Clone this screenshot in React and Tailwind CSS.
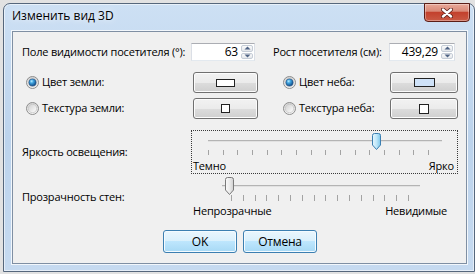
import React from 'react';

const greyBtn =
  'flex items-center justify-center rounded-[3px] border border-[#707070] bg-[linear-gradient(#f2f2f2_0%,#ebebeb_50%,#dddddd_50%,#cfcfcf_100%)] shadow-[inset_0_0_0_1px_#fcfcfc]';
const blueBtn =
  'flex items-center justify-center rounded-[3px] border border-[#3c7fb1] bg-[linear-gradient(#eaf6fd_0%,#d9f0fc_50%,#bee6fd_50%,#a7d9f5_100%)] shadow-[inset_0_0_0_1px_#f4fbff]';

const Radio = ({ checked }) => (
  <svg width="13" height="13" viewBox="0 0 13 13" className="shrink-0">
    <defs>
      <linearGradient id="rOuter" x1="0" y1="0" x2="0" y2="1">
        <stop offset="0" stopColor="#d4d4d4" />
        <stop offset="1" stopColor="#f6f6f6" />
      </linearGradient>
      <linearGradient id="rInner" x1="0" y1="0" x2="1" y2="1">
        <stop offset="0" stopColor="#cfcfcf" />
        <stop offset="1" stopColor="#ffffff" />
      </linearGradient>
      <radialGradient id="rDot" cx="0.38" cy="0.32" r="0.75">
        <stop offset="0" stopColor="#b8ecff" />
        <stop offset="0.35" stopColor="#3fa4e0" />
        <stop offset="1" stopColor="#0b3e78" />
      </radialGradient>
    </defs>
    <circle cx="6.5" cy="6.5" r="6" fill="url(#rOuter)" stroke="#8d8d8d" />
    <circle cx="6.5" cy="6.5" r="4.2" fill="url(#rInner)" stroke="#bdbdbd" strokeWidth="0.6" />
    {checked && <circle cx="6.5" cy="6.5" r="3.6" fill="url(#rDot)" stroke="#1d4f86" strokeWidth="0.6" />}
  </svg>
);

const Arrow = ({ up }) => (
  <svg width="7" height="4" viewBox="0 0 7 4">
    <path d={up ? 'M0.5 3.5 L3.5 0.5 L6.5 3.5 Z' : 'M0.5 0.5 L3.5 3.5 L6.5 0.5 Z'} fill="#4f6384" />
  </svg>
);

const Spin = ({ value, w }) => (
  <div className={`flex h-[18px] ${w} shrink-0 border border-[#abadb3] border-x-[#dbdfe6] border-b-[#e3e9ef] bg-white`}>
    <div className="flex-1 pr-[3px] text-right text-[12px] leading-[16px]">{value}</div>
    <div className="flex w-[13px] flex-col gap-px py-px pr-px">
      {[true, false].map((up) => (
        <div
          key={String(up)}
          className="flex flex-1 items-center justify-center rounded-[2px] border border-[#c5ccd6] bg-linear-to-b from-[#fbfbfb] to-[#e4e7eb]"
        >
          <Arrow up={up} />
        </div>
      ))}
    </div>
  </div>
);

const Ticks = ({ x0, step, y1, y2 }) =>
  Array.from({ length: 16 }, (_, i) => {
    const x = Math.round(x0 + i * step) + 0.5;
    return <line key={i} x1={x} x2={x} y1={y1} y2={y2} stroke="#a3a3a3" />;
  });

const Thumb = ({ x, y, h, blue }) => (
  <path
    d={`M${x + 0.5} ${y + 2.5} Q${x + 0.5} ${y + 0.5} ${x + 2.5} ${y + 0.5} H${x + 6.5} Q${x + 8.5} ${y + 0.5} ${x + 8.5} ${y + 2.5} V${y + h - 5} L${x + 4.5} ${y + h - 0.5} L${x + 0.5} ${y + h - 5} Z`}
    fill={blue ? 'url(#thBlue)' : 'url(#thGrey)'}
    stroke={blue ? '#3c7fb1' : '#7a7a7a'}
  />
);

const SliderDefs = () => (
  <defs>
    <linearGradient id="thBlue" x1="0" y1="0" x2="1" y2="0">
      <stop offset="0" stopColor="#e6f6fd" />
      <stop offset="0.5" stopColor="#bfe7f9" />
      <stop offset="1" stopColor="#7cc6ea" />
    </linearGradient>
    <linearGradient id="thGrey" x1="0" y1="0" x2="1" y2="0">
      <stop offset="0" stopColor="#fafafa" />
      <stop offset="0.5" stopColor="#ececec" />
      <stop offset="1" stopColor="#cfcfcf" />
    </linearGradient>
  </defs>
);

const Track = ({ x1, x2, y }) => (
  <>
    <line x1={x1} x2={x2} y1={y + 0.5} y2={y + 0.5} stroke="#b4b4b4" />
    <line x1={x1} x2={x2} y1={y + 1.5} y2={y + 1.5} stroke="#e2e2e2" />
  </>
);

export default function App() {
  return (
    <div className="h-[274px] w-[475px] overflow-hidden whitespace-nowrap bg-[#e2e2e2] pl-[3px] pt-[3px] font-['Open_Sans','Noto_Sans',sans-serif] text-[11px] tracking-[-0.2px] text-black">
      <div className="flex h-[269px] w-[472px] flex-col rounded-t-[7px] border border-[#56677c] bg-linear-to-b from-[#cde0f4] via-[#bcd3ec] to-[#c6daf0] shadow-[inset_0_0_0_1px_rgba(255,255,255,0.55)]">
        <div className="flex h-[27px] items-start">
          <div className="pl-[8px] pt-[5px] text-[12px] leading-[14px] tracking-normal [text-shadow:0_0_6px_#ffffff]">Изменить вид 3D</div>
          <div className="-mt-px mr-[4px] ml-auto flex h-[19px] w-[46px] items-center justify-center rounded-b-[4px] border border-[#5b1d16] bg-[linear-gradient(#e9a898_0%,#d98a78_42%,#c3412d_50%,#c95a44_100%)] shadow-[inset_0_0_0_1px_rgba(255,255,255,0.35)]">
            <svg width="12" height="10" viewBox="0 0 12 10">
              <path d="M2 1.5 L10 8.5 M10 1.5 L2 8.5" stroke="#5a1e17" strokeWidth="4" strokeLinecap="round" />
              <path d="M2 1.5 L10 8.5 M10 1.5 L2 8.5" stroke="#ffffff" strokeWidth="2.4" strokeLinecap="round" />
            </svg>
          </div>
        </div>
        <div className="ml-[8px] flex h-[233px] w-[455px] flex-col border border-[#7f8fa3] bg-[#f0f0f0] shadow-[0_0_0_1px_#f2f7fc]">
          <div className="mt-[11px] flex h-[18px] items-center pl-[9px]">
            <div className="w-[169px] shrink-0">Поле видимости посетителя (°):</div>
            <Spin value="63" w="w-[64px]" />
            <div className="ml-[18px] w-[116px] shrink-0">Рост посетителя (см):</div>
            <Spin value="439,29" w="w-[66px]" />
          </div>

          <div className="mt-[11px] flex h-[21px] items-center pl-[9px]">
            <div className="flex w-[171px] items-center pl-[4px]">
              <Radio checked />
              <span className="ml-[3px]">Цвет земли:</span>
            </div>
            <div className={`${greyBtn} h-[21px] w-[65px]`}>
              <span className="h-[8px] w-[19px] border border-[#222] bg-white" />
            </div>
            <div className="ml-[25px] flex w-[107px] items-center">
              <Radio checked />
              <span className="ml-[3px]">Цвет неба:</span>
            </div>
            <div className={`${greyBtn} h-[21px] w-[68px]`}>
              <span className="h-[9px] w-[21px] border border-[#222] bg-[#cfe2f8]" />
            </div>
          </div>

          <div className="mt-[5px] flex h-[21px] items-center pl-[9px]">
            <div className="flex w-[171px] items-center pl-[4px]">
              <Radio />
              <span className="ml-[3px]">Текстура земли:</span>
            </div>
            <div className={`${greyBtn} h-[21px] w-[65px]`}>
              <span className="h-[9px] w-[9px] border border-[#222] bg-white" />
            </div>
            <div className="ml-[25px] flex w-[107px] items-center">
              <Radio />
              <span className="ml-[3px]">Текстура неба:</span>
            </div>
            <div className={`${greyBtn} h-[21px] w-[68px]`}>
              <span className="h-[10px] w-[10px] border border-[#222] bg-white" />
            </div>
          </div>

          <div className="mt-[11px] flex items-center pl-[9px]">
            <div className="w-[169px]">Яркость освещения:</div>
            <div className="flex h-[44px] w-[267px] flex-col border border-dotted border-[#3a3a3a]">
              <svg width="265" height="28" viewBox="0 0 265 28">
                <SliderDefs />
                <Track x1={16} x2={250} y={9} />
                <Ticks x0={16} step={14.667} y1={19} y2={24} />
                <Thumb x={180} y={2} h={17} blue />
              </svg>
              <div className="flex h-[14px] justify-between pl-px pr-[3px] leading-[14px]">
                <span>Темно</span>
                <span>Ярко</span>
              </div>
            </div>
          </div>

          <div className="mt-px flex items-center pl-[9px]">
            <div className="w-[169px]">Прозрачность стен:</div>
            <div className="flex h-[44px] w-[267px] flex-col border border-transparent">
              <svg width="265" height="28" viewBox="0 0 265 28">
                <SliderDefs />
                <Track x1={30} x2={228} y={9} />
                <Ticks x0={39} step={11.8} y1={19} y2={25} />
                <Thumb x={33} y={1} h={18} />
              </svg>
              <div className="flex h-[14px] justify-between pl-px pr-[10px] leading-[14px]">
                <span>Непрозрачные</span>
                <span>Невидимые</span>
              </div>
            </div>
          </div>

          <div className="mt-[11px] flex justify-center gap-[6px] pl-px">
            <div className={`${blueBtn} h-[23px] w-[74px] text-[12px]`}>OK</div>
            <div className={`${blueBtn} h-[23px] w-[74px] text-[12px]`}>Отмена</div>
          </div>
        </div>
      </div>
    </div>
  );
}
